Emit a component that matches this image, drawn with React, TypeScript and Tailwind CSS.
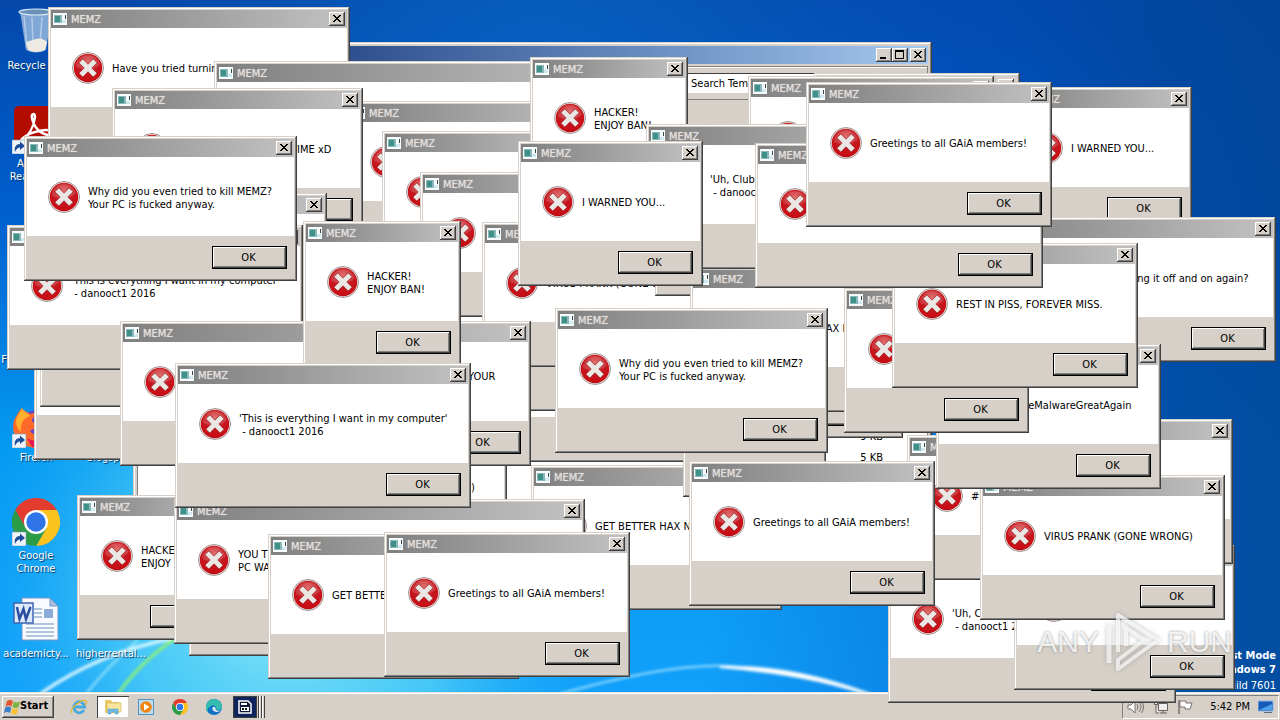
import React from "react";

const UI_FONT = "font-['DejaVu_Sans_Condensed','DejaVu_Sans',sans-serif]";
const RAISED =
  "shadow-[inset_-1px_-1px_0_#404040,inset_1px_1px_0_#ffffff,inset_-2px_-2px_0_#808080]";
const FRAME =
  "shadow-[inset_-1px_-1px_0_#404040,inset_1px_1px_0_#d6d0c9,inset_-2px_-2px_0_#808080,inset_2px_2px_0_#ffffff]";

const MESSAGES = {
  greetings: { text: "Greetings to all GAiA members!", width: 246 },
  why: { text: "Why did you even tried to kill MEMZ?\nYour PC is fucked anyway.", width: 273 },
  warned: { text: "I WARNED YOU...", width: 185 },
  hacker: { text: "HACKER!\nENJOY BAN!", width: 158 },
  everything: { text: "'This is everything I want in my computer'\n - danooct1 2016", width: 296 },
  club: { text: "'Uh, Club Penguin. Time to get banned!'\n - danooct1 2016", width: 288 },
  rest: { text: "REST IN PISS, FOREVER MISS.", width: 246 },
  virus: { text: "VIRUS PRANK (GONE WRONG)", width: 245 },
  nimrod: { text: "GET BETTER HAX NIMROD xD", width: 251 },
  luck: { text: "GOOD LUCK THE NEXT TIME xD", width: 251 },
  turning: { text: "Have you tried turning it off and on again?", width: 302 },
  hashtag: { text: "#MakeMalwareGreatAgain", width: 225 },
  hard: {
    text: "YOU TRIED SO HARD AND GOT SO FAR, BUT IN THE END, YOUR\nPC WAS STILL FUCKED!",
    width: 411,
  },
  blank: { text: "", width: 143 },
};

type Entry = { kind: keyof typeof MESSAGES; x: number; y: number; w?: number };

// Painted in order, so later entries lie on top.
const DIALOGS: Entry[] = [
  { kind: "turning", x: 48, y: 7 },
  { kind: "hard", x: 214, y: 61 },
  { kind: "virus", x: 262, y: 426 },
  { kind: "blank", x: 380, y: 317, w: 351 },
  { kind: "blank", x: 390, y: 266, w: 290 },
  { kind: "blank", x: 346, y: 101, w: 246 },
  { kind: "warned", x: 382, y: 131 },
  { kind: "warned", x: 420, y: 172 },
  { kind: "virus", x: 482, y: 222 },
  { kind: "blank", x: 655, y: 151, w: 246 },
  { kind: "blank", x: 695, y: 293, w: 208 },
  { kind: "nimrod", x: 690, y: 267 },
  { kind: "luck", x: 112, y: 88 },
  { kind: "blank", x: 81, y: 193, w: 246 },
  { kind: "blank", x: 34, y: 315, w: 246 },
  { kind: "blank", x: 40, y: 262, w: 246 },
  { kind: "everything", x: 7, y: 225 },
  { kind: "why", x: 24, y: 136 },
  { kind: "hard", x: 120, y: 321 },
  { kind: "hacker", x: 303, y: 221 },
  { kind: "hacker", x: 77, y: 495 },
  { kind: "blank", x: 189, y: 511 },
  { kind: "nimrod", x: 531, y: 465 },
  { kind: "blank", x: 683, y: 352 },
  { kind: "hard", x: 174, y: 499 },
  { kind: "everything", x: 175, y: 363 },
  { kind: "nimrod", x: 268, y: 534 },
  { kind: "greetings", x: 384, y: 532 },
  { kind: "hacker", x: 530, y: 57 },
  { kind: "blank", x: 748, y: 76, w: 246 },
  { kind: "club", x: 646, y: 124 },
  { kind: "warned", x: 518, y: 141 },
  { kind: "why", x: 555, y: 308 },
  { kind: "warned", x: 1007, y: 87 },
  { kind: "turning", x: 974, y: 217 },
  { kind: "club", x: 888, y: 558 },
  { kind: "hashtag", x: 907, y: 435 },
  { kind: "blank", x: 1014, y: 545, w: 221 },
  { kind: "blank", x: 987, y: 419, w: 246 },
  { kind: "virus", x: 980, y: 475 },
  { kind: "hashtag", x: 936, y: 344 },
  { kind: "warned", x: 844, y: 288 },
  { kind: "rest", x: 892, y: 243 },
  { kind: "blank", x: 755, y: 143, w: 288 },
  { kind: "greetings", x: 806, y: 82 },
  { kind: "greetings", x: 689, y: 461 },
];

function ErrorIcon() {
  return (
    <svg viewBox="0 0 32 32" className="size-8 shrink-0" aria-hidden="true">
      <circle cx="16" cy="16" r="15.5" fill="#f1e6e4" stroke="#8d7f7d" strokeWidth="0.8" />
      <circle cx="16" cy="16" r="14.2" fill="url(#errorRed)" />
      <path d="M4 12a12.6 12.6 0 0 1 24 0c-4 5-16 7-24 3z" fill="#fff" opacity="0.14" />
      <path
        d="M6.900 10.800l3.900-3.900 5.200 5.300 5.200-5.300 3.900 3.900-5.300 5.200 5.300 5.200-3.900 3.900-5.200-5.300-5.200 5.300-3.900-3.900 5.300-5.200z"
        fill="#eae7e5"
        stroke="#8e1014"
        strokeWidth="0.6"
      />
    </svg>
  );
}

function AppIcon() {
  return (
    <svg viewBox="0 0 14 12" className="h-3 w-[14px] shrink-0" aria-hidden="true">
      <path d="M0 0h14v12H0z" fill="#f8fbfb" />
      <path d="M1 2h8v8H1z" fill="#8ab8bd" />
      <path d="M2 3h5v6H2z" fill="#3f9187" />
      <path d="M9 7h4v3H9z" fill="#cfe9f1" />
      <path d="M12 2h1v4h-1z" fill="#35474c" />
    </svg>
  );
}

function CaptionButton({ label, glyph }: { label: string; glyph: "close" | "max" | "min" }) {
  return (
    <button
      type="button"
      aria-label={label}
      className={`flex h-[14px] w-4 shrink-0 items-center justify-center bg-[#d6d0c9] ${RAISED}`}
    >
      <svg viewBox="0 0 16 14" className="h-[14px] w-4" fill="none" stroke="#000" shapeRendering="crispEdges">
        {glyph === "close" && (
          <path
            stroke="none"
            fill="#000"
            d="M4 3h2v1h1v1h2V4h1V3h2v1h-1v1h-1v1H9v1h1v1h1v1h1v1h-2V9H9V8H7v1H6v1H4V9h1V8h1V7h1V6H6V5H5V4H4z"
          />
        )}
        {glyph === "max" && <path d="M3 3h9M3.500 2v9M11.500 2v9M3 10.500h9M3 2h9" />}
        {glyph === "min" && <path d="M4 10h6" strokeWidth="2" />}
      </svg>
    </button>
  );
}

function Dialog({ kind, x, y, w }: Entry) {
  const { text, width } = MESSAGES[kind];
  return (
    <section
      role="alertdialog"
      aria-label="MEMZ"
      className={`absolute flex flex-col bg-[#d6d0c9] p-[3px] ${FRAME}`}
      style={{ left: x, top: y, width: w ?? width }}
    >
      <header className="flex h-[18px] items-center bg-linear-to-r from-[#808080] to-[#c2c2c2] px-[2px]">
        <AppIcon />
        <h2 className="ml-1 flex-1 pt-px text-[11px] leading-[13px] font-normal text-[#e2deda] [text-shadow:0_0_1px_#e2deda]">
          MEMZ
        </h2>
        <CaptionButton label="Close" glyph="close" />
      </header>
      <div className="flex h-[79px] items-center gap-2 bg-white pl-[21px]">
        <ErrorIcon />
        <p className="pt-[2px] text-[11px] leading-[13px] whitespace-pre text-black">{text}</p>
      </div>
      <footer className="flex h-[42px] justify-end pt-[10px] pr-[7px]">
        <button
          type="button"
          className="h-[23px] w-[75px] border border-black bg-[#d6d0c9] pr-[2px] text-[11px] leading-none text-black shadow-[inset_-1px_-1px_0_#404040,inset_1px_1px_0_#ffffff,inset_-2px_-2px_0_#808080]"
        >
          OK
        </button>
      </footer>
    </section>
  );
}

function Shortcut() {
  return (
    <>
      <path d="M0 34h14v14H0z" fill="#eef4fa" stroke="#7e97b4" strokeWidth="0.6" />
      <path d="M3 46c-1-5 1-8 5-8v-2.500l5 4.500-5 4v-2.500c-2 0-4 1.500-5 4.500z" fill="#1c4e9c" />
    </>
  );
}

const svgCls = "h-12 w-12";

function BinIcon() {
  return (
    <svg viewBox="0 0 48 48" className={svgCls}>
      <path d="M8 4l6 38q10 5 20 0l6-38z" fill="#a9c6e2" opacity="0.75" />
      <path d="M14 34l2 8q8 4 17 0l2-8q-5-5-11-3z" fill="#eeeae2" />
      <path d="M12 8l3 32M20 9l1 30M30 9l-2 28" stroke="#e2f0fb" strokeWidth="1.500" opacity="0.5" />
      <ellipse cx="24" cy="4" rx="17" ry="3" fill="#6c91b8" stroke="#dceafa" strokeWidth="1.200" />
    </svg>
  );
}

function AcrobatIcon() {
  return (
    <svg viewBox="0 0 48 48" className={svgCls}>
      <rect x="2" y="0" width="44" height="46" rx="5" fill="#b30b00" />
      <path
        d="M10 35c6-5 12-14 13-24 0-5-4-3-3 1 2 10 9 17 18 17 5-1 2-5-4-5-8 0-19 4-24 9-3 4 0 5 3 1"
        fill="none"
        stroke="#fff"
        strokeWidth="2.500"
      />
      <Shortcut />
    </svg>
  );
}

function FileZillaIcon() {
  return (
    <svg viewBox="0 0 48 48" className={svgCls}>
      <rect x="2" y="2" width="44" height="44" rx="4" fill="#b90000" />
      <path d="M14 36l5-24h17l-2 5H24l-1 5h8l-2 4h-7l-2 10z" fill="#fff" />
      <Shortcut />
    </svg>
  );
}

function FirefoxIcon() {
  return (
    <svg viewBox="0 0 48 48" className={svgCls}>
      <circle cx="25" cy="27" r="17" fill="#6442c9" />
      <path d="M10 8c2 4 5 3 8 6 3-1 6-1 8 0-5 2-6 5-6 8 4 0 6 2 5 5-2 2-5 2-7 4 5 7 15 4 19-3 1-7-1-13-6-18 11 4 16 12 15 21-2 11-11 17-22 17S2 39 1 28c0-5 1-9 4-13 1-3 3-5 5-7z" fill="#ff6a2b" />
      <path d="M5 17c2-4 4-6 5-9 2 5 5 4 8 8-7 2-10 8-9 16-5-5-6-10-4-15z" fill="#ffb12f" />
      <path d="M15 38c8 5 20 3 27-7-2 11-12 17-22 16z" fill="#e5184f" />
      <Shortcut />
    </svg>
  );
}

function ChromeGlyph({ small = false }: { small?: boolean }) {
  return (
    <svg viewBox="0 0 48 48" className={small ? "size-4" : svgCls}>
      <path d="M24 12h20.800A24 24 0 0 1 24 48l10.400-18z" fill="#fcc31e" />
      <path d="M13.600 30L3.200 12A24 24 0 0 1 44.800 12H24z" fill="#e33b2e" />
      <path d="M34.400 30L24 48A24 24 0 0 1 3.200 12l10.400 18z" fill="#2c9b45" />
      <circle cx="24" cy="24" r="12" fill="#fff" />
      <circle cx="24" cy="24" r="9.700" fill="#2f74e8" />
      {!small && <Shortcut />}
    </svg>
  );
}

function WordIcon() {
  return (
    <svg viewBox="0 0 48 48" className={svgCls}>
      <path d="M10 2h28l8 8v34H10z" fill="#f7fbff" stroke="#7796c4" />
      <path d="M38 2v8h8z" fill="#a7bfe2" stroke="#7796c4" />
      <path d="M22 13h8M22 17h8M22 21h8M14 28h28M14 32h28M14 36h28M14 40h28" stroke="#6f8fc0" strokeWidth="1.200" />
      <rect x="32" y="13" width="9" height="9" fill="#8dabd8" />
      <rect x="2" y="7" width="19" height="20" fill="#dfeaf9" stroke="#3e66b4" strokeWidth="1.500" />
      <path d="M5 11l2.500 12L11.500 13 14 23l4.500-12" fill="none" stroke="#28509f" strokeWidth="2.500" />
    </svg>
  );
}

const ICONS = [
  { label: "Recycle Bin", icon: <BinIcon />, place: "col-start-1 row-start-1" },
  { label: "Acrobat\nReader DC", icon: <AcrobatIcon />, place: "col-start-1 row-start-2" },
  { label: "FileZilla Client", icon: <FileZillaIcon />, place: "col-start-1 row-start-4" },
  { label: "Firefox", icon: <FirefoxIcon />, place: "col-start-1 row-start-5" },
  { label: "blogspa...", icon: <WordIcon />, place: "col-start-2 row-start-5" },
  { label: "Google\nChrome", icon: <ChromeGlyph />, place: "col-start-1 row-start-6" },
  { label: "academicty...", icon: <WordIcon />, place: "col-start-1 row-start-7" },
  { label: "higherrental...", icon: <WordIcon />, place: "col-start-2 row-start-7" },
];

function Wallpaper() {
  return (
    <svg
      aria-hidden="true"
      className="absolute inset-0 h-full w-full"
      viewBox="0 0 1280 720"
      preserveAspectRatio="none"
    >
      <defs>
        <linearGradient id="sky" x1="0" y1="0" x2="0" y2="1">
          <stop offset="0" stopColor="#0448aa" />
          <stop offset="0.3" stopColor="#0060cf" />
          <stop offset="0.62" stopColor="#059af2" />
          <stop offset="1" stopColor="#12a0fb" />
        </linearGradient>
        <radialGradient id="glow" gradientUnits="userSpaceOnUse" cx="290" cy="600" r="330">
          <stop offset="0" stopColor="#8deaf7" />
          <stop offset="0.5" stopColor="#55d3f6" stopOpacity="0.75" />
          <stop offset="1" stopColor="#17a6f7" stopOpacity="0" />
        </radialGradient>
        <radialGradient id="top" gradientUnits="userSpaceOnUse" cx="540" cy="90" r="420">
          <stop offset="0" stopColor="#0860c0" />
          <stop offset="1" stopColor="#0860c0" stopOpacity="0" />
        </radialGradient>
        <linearGradient id="shade" x1="0" y1="0" x2="1" y2="0">
          <stop offset="0.55" stopColor="#0250c0" stopOpacity="0" />
          <stop offset="0.7" stopColor="#0150c0" stopOpacity="0.3" />
          <stop offset="0.9" stopColor="#0047a0" stopOpacity="0.88" />
          <stop offset="1" stopColor="#004598" stopOpacity="0.9" />
        </linearGradient>
        <radialGradient id="errorRed" cx="0.5" cy="0.3" r="0.75">
          <stop offset="0" stopColor="#dc5a59" />
          <stop offset="0.5" stopColor="#c5171f" />
          <stop offset="0.85" stopColor="#c90d14" />
          <stop offset="1" stopColor="#8e0c12" />
        </radialGradient>
        <filter id="soft">
          <feGaussianBlur stdDeviation="1.500" />
        </filter>
      </defs>
      <rect width="1280" height="720" fill="url(#sky)" />
      <rect width="1280" height="720" fill="url(#top)" />
      <rect width="1280" height="720" fill="url(#glow)" />
      <rect width="1280" height="720" fill="url(#shade)" />
      <g fill="none" filter="url(#soft)">
        <path d="M40 694Q100 652 175 638" stroke="#e5fbff" strokeWidth="3" />
        <path d="M86 694Q110 664 138 640" stroke="#c5f4ff" strokeWidth="1.500" />
        <path d="M118 694Q140 662 176 638" stroke="#8df078" strokeWidth="3" />
        <path d="M560 694Q680 660 740 667Q800 668 876 696" stroke="#9fe0ff" strokeWidth="2" />
        <path d="M720 667Q800 666 872 696Q810 674 720 667" fill="#fff" stroke="#fff" strokeWidth="2" />
      </g>
    </svg>
  );
}

function Explorer() {
  return (
    <section
      aria-label="Temp"
      className={`absolute top-[42px] left-[133px] flex h-[520px] w-[799px] flex-col bg-[#d6d0c9] p-1 ${FRAME}`}
    >
      <header className="flex h-[18px] items-center justify-end bg-linear-to-r from-[#0a246a] to-[#a6caf0] px-[2px]">
        <CaptionButton label="Minimize" glyph="min" />
        <CaptionButton label="Maximize" glyph="max" />
        <span className="w-[2px]" />
        <CaptionButton label="Close" glyph="close" />
      </header>
      <div className="mt-[2px] flex h-[34px] items-center justify-end border border-[#808080] pr-1 shadow-[inset_1px_1px_0_#fff]">
        <label htmlFor="search" className="sr-only">
          Search Temp
        </label>
        <input
          id="search"
          type="text"
          placeholder="Search Temp"
          className="h-[20px] w-[237px] border-t border-[#404040] bg-white pl-[5px] text-[11px] text-black placeholder:text-black"
        />
      </div>
      <div className="h-[28px]" />
      <div className="flex-1 border border-[#808080] bg-white pt-[298px] pr-[44px]">
        <table className="ml-auto text-right text-[11px] text-black">
          <tbody>
            <tr className="h-[21px]">
              <td>9 KB</td>
            </tr>
            <tr className="h-[21px]">
              <td>5 KB</td>
            </tr>
          </tbody>
        </table>
      </div>
    </section>
  );
}

function BackWindow() {
  return (
    <section aria-label="Window" className={`absolute top-[73px] left-[814px] h-[140px] w-[206px] bg-[#d6d0c9] p-1 ${FRAME}`}>
      <header className="flex h-[18px] items-center justify-end gap-2 bg-linear-to-r from-[#c2c2c2] to-[#d6d0c9] px-[2px]">
        <CaptionButton label="Maximize" glyph="max" />
        <CaptionButton label="Close" glyph="close" />
      </header>
    </section>
  );
}

function StartFlag() {
  return (
    <svg viewBox="0 0 16 16" className="size-4 shrink-0">
      <path d="M3 2q3-2 6 0L7.500 7.500Q5 5.500 1.500 7.500z" fill="#e5532a" />
      <path d="M10 2.500q3 2 6 0l-1.500 5.500q-3 2-6 0z" fill="#7db343" />
      <path d="M1.200 8.500q3-2 6 0L6 14q-3-2-6 0z" fill="#3a7fc9" />
      <path d="M8.200 9q3 2 6 0L13 14.500q-3 2-6 0z" fill="#f6c234" />
    </svg>
  );
}

function Taskbar() {
  const item = "flex h-[22px] w-[34px] items-center justify-center";
  return (
    <footer className="relative flex h-7 items-center border-t border-[#e8e4df] bg-[#d6d0c9] shadow-[inset_0_1px_0_#fff]">
      <button type="button" className={`ml-[2px] flex h-[22px] w-[52px] items-center bg-[#d6d0c9] pl-[2px] text-[11px] font-bold text-black ${RAISED}`}>
        <StartFlag />
        Start
      </button>
      <nav aria-label="Quick launch" className="ml-2 flex items-center">
        <button type="button" aria-label="Internet Explorer" className={item}>
          <svg viewBox="0 0 18 18" className="size-[18px]" fill="none">
            <path d="M14 12a5.500 5.500 0 1 1 .7-3H5" stroke="#49a9de" strokeWidth="2.800" />
            <path d="M2 15C-1 11 12 0 16 3c1 1 0 3-1 4" stroke="#e3b52e" strokeWidth="1.300" />
          </svg>
        </button>
        <button type="button" aria-label="Explorer" className="ml-px flex h-[22px] w-8 items-center justify-center bg-white shadow-[inset_1px_1px_0_#404040,inset_-1px_-1px_0_#d6d0c9]">
          <svg viewBox="0 0 18 18" className="size-[18px]">
            <path d="M1 2h6l1 2h7v11H1z" fill="#e9c968" />
            <path d="M3 5h14v9H3z" fill="#f8e69d" stroke="#d0ad52" strokeWidth="0.600" />
            <path d="M4 16v-5h10v5h-3v-2H7v2z" fill="#72bce4" stroke="#4696c8" strokeWidth="0.500" />
          </svg>
        </button>
        <button type="button" aria-label="Media Player" className={item}>
          <svg viewBox="0 0 16 16" className="size-4">
            <rect x="0.500" y="0.500" width="15" height="15" fill="#bfdcf0" stroke="#5295c4" />
            <circle cx="8" cy="8" r="5.800" fill="#f0860d" />
            <path d="M6 4.500v7L11.500 8z" fill="#fff" />
          </svg>
        </button>
        <button type="button" aria-label="Chrome" className={item}>
          <ChromeGlyph small />
        </button>
        <button type="button" aria-label="Edge" className={item}>
          <svg viewBox="0 0 16 16" className="size-4">
            <circle cx="8" cy="8" r="8" fill="#1273c5" />
            <path d="M0 8a8 8 0 0 1 16 0c0 3-4 4-6 2 1-3-3-5-5-3-3 1-4 4-3 7a8 8 0 0 1-2-6z" fill="#36bcae" />
            <path d="M9.500 9c-.500 2 2 3.500 5 2.500-1 1-6 3-8-1-1-2 2-4 3-1.500z" fill="#d9e7ee" />
          </svg>
        </button>
        <button type="button" aria-label="MEMZ" className="ml-[2px] flex h-[22px] w-[24px] items-center justify-center border border-[#404040] bg-[#10245c]">
          <svg viewBox="0 0 14 14" className="size-[14px]">
            <path d="M1 1h9l3 3v9H1z" fill="#111a3c" stroke="#fff" strokeWidth="1.500" />
            <path d="M3 3h6v2H3zM3 7h8v4H3z" fill="#fff" />
            <path d="M4 8h2v2H4zM7 8h2v2H7z" fill="#111" />
          </svg>
        </button>
        <span className="ml-[1px] h-[22px] w-[7px] border-x border-[#404040] bg-[linear-gradient(90deg,#fff_0_1px,#d6d0c9_1px_2px,#404040_2px_3px,#fff_3px_4px,#d6d0c9_4px)]" />
      </nav>
      <div className="mr-[1px] ml-auto flex h-[24px] w-[157px] items-center border border-[#808080] border-r-white border-b-white pr-1 pl-1 text-[11px] text-black">
        <div className="flex flex-1 items-center gap-2">
          <svg viewBox="0 0 18 16" className="h-4 w-[18px]" fill="none" stroke="#77726e">
            <path d="M1 6h3l4-4v12l-4-4H1z" fill="#fff" />
            <path d="M10 5q2 3 0 6M12 3q4 5 0 10M14.500 2q4 6 0 12" />
          </svg>
          <svg viewBox="0 0 16 16" className="size-4" fill="none" stroke="#66615e">
            <path d="M5.500 4.500h9v7h-9zM7 14h7M10 12v2" fill="#eee" />
            <path d="M1.500 1.500h3v4h-3zM3 6v8h3" fill="#eee" />
          </svg>
          <svg viewBox="0 0 16 16" className="size-4" fill="none" stroke="#77726e">
            <path d="M2 1v14" strokeWidth="1.500" />
            <path d="M3 2h6v2h6l-2 6H8V8H3z" fill="#fff" />
          </svg>
        </div>
        <time className="mr-2 pt-[2px] whitespace-nowrap">5:42 PM</time>
        <svg viewBox="0 0 16 14" className="h-[14px] w-4">
          <path d="M0 1h15v10H0z" fill="#175bb8" stroke="#8fb8e4" />
          <path d="M1 10L14 4v6z" fill="#4fa0e8" />
          <path d="M6 12h8v1H6z" fill="#5f6b7a" />
        </svg>
      </div>
    </footer>
  );
}

function Watermark() {
  return (
    <div
      aria-label="ANY RUN"
      className="pointer-events-none absolute right-[48px] bottom-[46px] flex items-center gap-[5px] font-['Liberation_Sans_Narrow','Liberation_Sans',sans-serif] text-[30px] leading-none text-white/80 [text-shadow:0_0_3px_#777777cc]"
    >
      <span>ANY</span>
      <svg viewBox="0 0 58 64" className="h-16 w-[58px] drop-shadow-[0_0_2px_#777777aa]" fill="none" stroke="#fff" strokeOpacity="0.7" strokeWidth="4">
        <path d="M5 15v38" strokeWidth="5" />
        <path d="M14 42V5l40 25-40 29v-9l26-20-18-12v18" strokeLinejoin="round" />
      </svg>
      <span>RUN</span>
    </div>
  );
}

export default function App() {
  return (
    <main className={`relative flex min-h-screen flex-col overflow-hidden ${UI_FONT}`}>
      <Wallpaper />
      <div className="relative grid auto-rows-[98px] grid-cols-[72px_78px] self-start">
        {ICONS.map(({ label, icon, place }) => (
          <a key={label} href="#desktop" className={`flex flex-col items-center pt-2 ${place}`}>
            {icon}
            <span className="mt-[3px] text-center text-[11px] leading-[13px] whitespace-pre text-white [text-shadow:1px_1px_1px_#003060]">
              {label}
            </span>
          </a>
        ))}
      </div>
      <div className="absolute right-1 bottom-[27px] text-right text-[11px] leading-[14px] text-white">
        <p className="font-bold">Test Mode</p>
        <p className="font-bold">Windows 7</p>
        <p className="mt-[2px]">Build 7601</p>
      </div>
      <div className="absolute inset-x-0 bottom-0">
        <Taskbar />
      </div>
      <Explorer />
      <BackWindow />
      {DIALOGS.map((d) => (
        <Dialog key={`${d.x}-${d.y}`} {...d} />
      ))}
      <Watermark />
    </main>
  );
}
